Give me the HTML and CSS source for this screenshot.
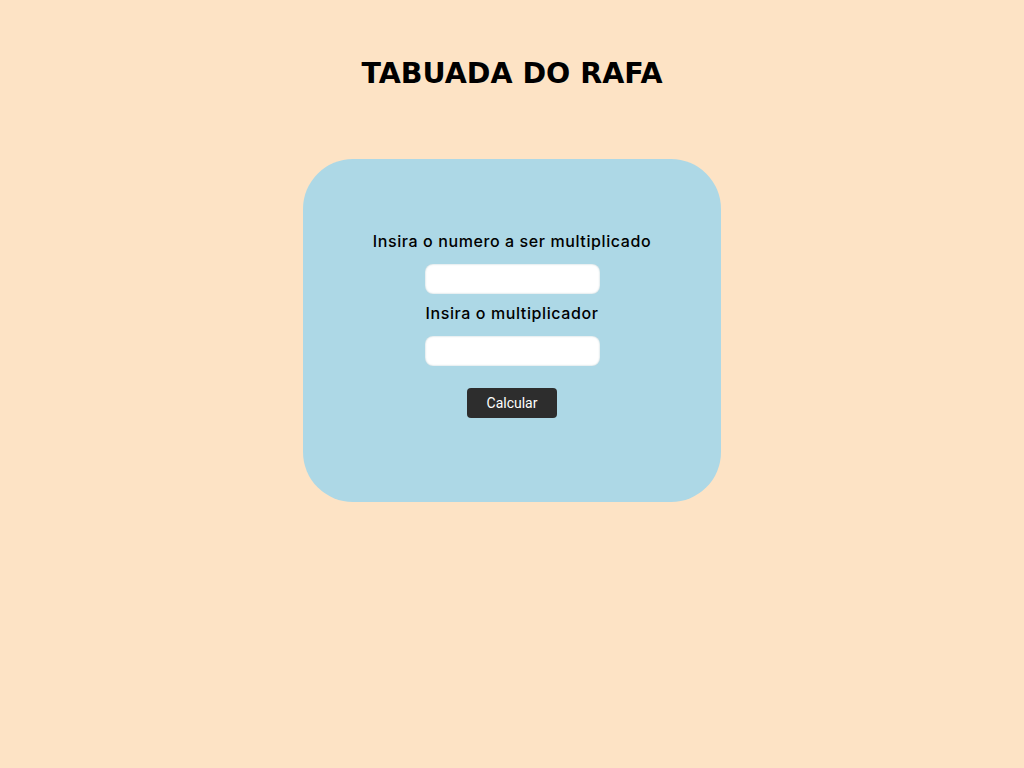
FILE: index.html
```html
<!DOCTYPE html>
<html lang="pt">
<head>
<meta charset="utf-8">
<title>Tabuada do Rafa</title>
<link rel="stylesheet" href="styles.css">
</head>
<body>
<h1 class="title">TABUADA DO RAFA</h1>
<main class="card">
  <label class="label" for="n1">Insira o numero a ser multiplicado</label>
  <input class="field" id="n1" type="text">
  <label class="label label-second" for="n2">Insira o multiplicador</label>
  <input class="field" id="n2" type="text">
  <button class="btn" type="button">Calcular</button>
</main>
</body>
</html>
```
FILE: styles.css
```css
html, body {
  margin: 0;
  padding: 0;
}
body {
  background: #fde3c5;
  font-family: Inter, "DejaVu Sans", sans-serif;
  color: #000;
}
.title {
  margin: 0;
  padding-top: 54px;
  height: 40px;
  line-height: 40px;
  text-align: center;
  font-family: "DejaVu Sans", sans-serif;
  font-size: 28.5px;
  font-weight: 700;
}
.card {
  box-sizing: border-box;
  width: 418px;
  height: 343px;
  margin: 65px auto 0;
  padding-top: 70px;
  background: #add8e6;
  border-radius: 50px;
  display: flex;
  flex-direction: column;
  align-items: center;
}
.label {
  display: block;
  height: 24px;
  line-height: 24px;
  font-size: 16px;
  font-weight: 500;
  letter-spacing: 0.6px;
}
.label-second {
  margin-top: 7px;
}
.field {
  box-sizing: border-box;
  width: 175px;
  height: 30px;
  margin-top: 11px;
  border: none;
  border-radius: 8px;
  background: #fff;
  box-shadow: inset 0 0 2px rgba(120, 160, 170, 0.6);
  outline: none;
}
.btn {
  box-sizing: border-box;
  width: 90px;
  height: 30px;
  margin-top: 22px;
  border: none;
  border-radius: 4px;
  background: #2d2d2d;
  color: #fff;
  font-family: Roboto, "Liberation Sans", sans-serif;
  font-size: 14px;
  cursor: pointer;
}
```
